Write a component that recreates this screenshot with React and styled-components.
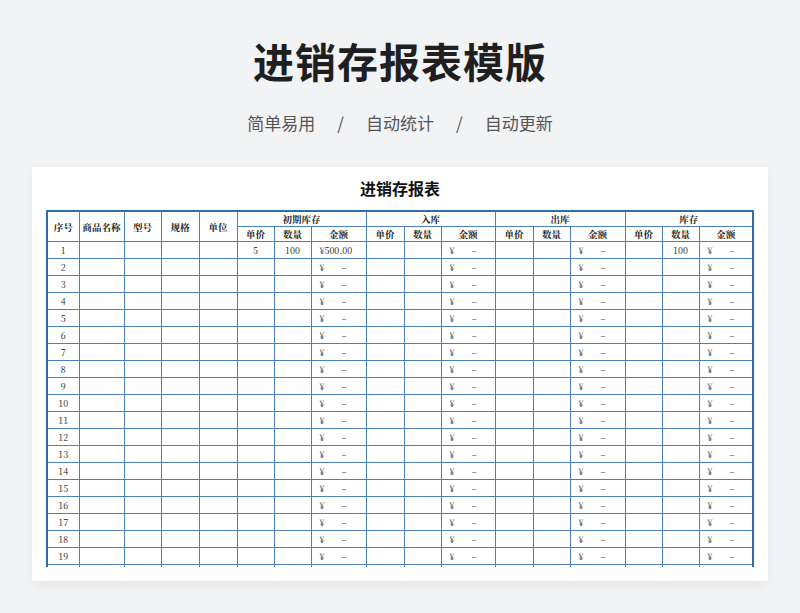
import React from "react";
import styled, { createGlobalStyle } from "styled-components";

const Global = createGlobalStyle`
  html, body { margin: 0; padding: 0; background: #f2f3f5; }
  body { font-family: "Noto Sans CJK SC", "Noto Sans", sans-serif; }
`;

const Page = styled.div`
  width: 800px;
  height: 613px;
  display: flex;
  flex-direction: column;
  align-items: center;
  overflow: hidden;
`;

const Title = styled.h1`
  margin: 32px 0 0;
  font-size: 41px;
  line-height: 56px;
  font-weight: 700;
  color: #1f1f1f;
  letter-spacing: 1px;
`;

const Sub = styled.div`
  margin-top: 23px;
  display: flex;
  gap: 22px;
  font-size: 17px;
  line-height: 24px;
  color: #555;
`;

const Card = styled.div`
  margin-top: 32px;
  width: 736px;
  height: 414px;
  background: #fff;
  box-shadow: 0 4px 10px rgba(0, 0, 0, 0.06);
  display: flex;
  flex-direction: column;
  align-items: center;
`;

const SheetTitle = styled.div`
  margin-top: 10px;
  font-size: 16px;
  line-height: 22px;
  font-weight: 700;
  color: #111;
`;

const Clip = styled.div`
  margin-top: 11px;
  width: 708px;
  height: 357px;
  overflow: hidden;
`;

const Table = styled.table`
  border-collapse: collapse;
  table-layout: fixed;
  width: 708px;
  font-family: "Noto Serif CJK SC", "Liberation Serif", "Noto Sans CJK SC", serif;
  font-size: 9px;
  color: #222;
  border: 2px solid #2f6ea8;
  td, th {
    border: 1px solid #4a82b8;
    padding: 0;
    text-align: center;
    overflow: hidden;
    white-space: nowrap;
  }
  th { font-weight: 700; font-size: 9.5px; height: 12px; }
  td { height: 16px; }
`;

const Money = styled.td`
  && { text-align: left; padding-left: 8px; }
  span { display: inline-block; width: 22px; }
`;

const widths = [32, 45, 37, 38, 38, 37, 37, 55, 38, 37, 54, 38, 37, 55, 37, 37, 54];
const groups = ["初期库存", "入库", "出库", "库存"];

function Amt({ v }) {
  return v ? <Money>¥500.00</Money> : <Money><span>¥</span>–</Money>;
}

export default function App() {
  const rows = Array.from({ length: 21 }, (_, i) => i + 1);
  return (
    <Page>
      <Global />
      <Title>进销存报表模版</Title>
      <Sub>
        <span>简单易用</span><span>/</span><span>自动统计</span><span>/</span><span>自动更新</span>
      </Sub>
      <Card>
        <SheetTitle>进销存报表</SheetTitle>
        <Clip>
          <Table>
            <colgroup>
              {widths.map((w, i) => <col key={i} style={{ width: w }} />)}
            </colgroup>
            <thead>
              <tr>
                {["序号", "商品名称", "型号", "规格", "单位"].map((h) => (
                  <th key={h} rowSpan={2}>{h}</th>
                ))}
                {groups.map((g) => <th key={g} colSpan={3}>{g}</th>)}
              </tr>
              <tr>
                {groups.map((g) => ["单价", "数量", "金额"].map((h) => <th key={g + h}>{h}</th>))}
              </tr>
            </thead>
            <tbody>
              {rows.map((n) => (
                <tr key={n}>
                  <td>{n}</td><td /><td /><td /><td />
                  <td>{n === 1 ? "5" : ""}</td>
                  <td>{n === 1 ? "100" : ""}</td>
                  <Amt v={n === 1} />
                  <td /><td /><Amt />
                  <td /><td /><Amt />
                  <td /><td>{n === 1 ? "100" : ""}</td><Amt />
                </tr>
              ))}
            </tbody>
          </Table>
        </Clip>
      </Card>
    </Page>
  );
}
